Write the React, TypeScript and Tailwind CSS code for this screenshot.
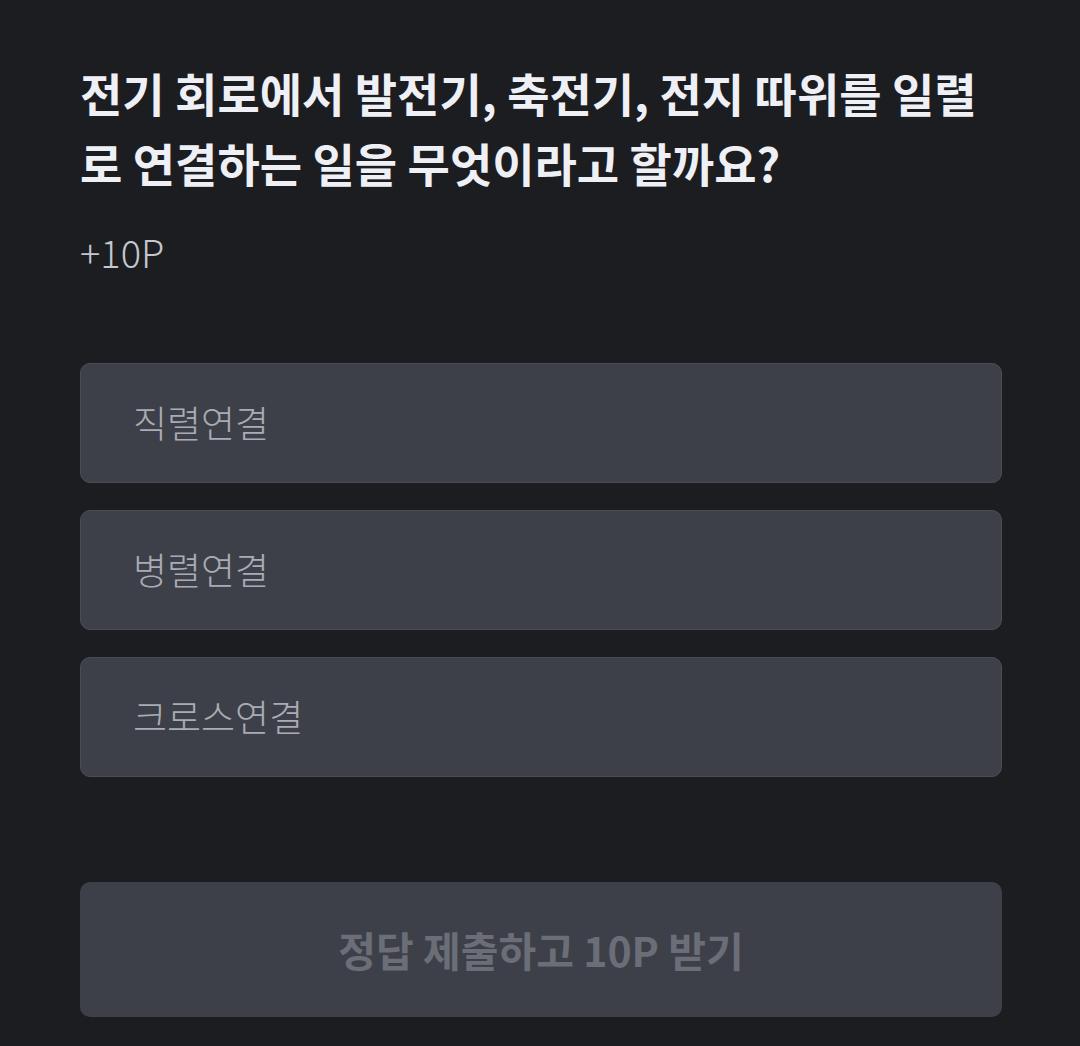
const options = ["직렬연결", "병렬연결", "크로스연결"];

export default function App() {
  return (
    <div
      className="min-h-[1046px] w-full bg-[#1c1d21] pl-[80px] pr-[78px] pt-[57px]"
      style={{ fontFamily: '"Noto Sans CJK KR", "Noto Sans", sans-serif' }}
    >
      <h1 className="break-all text-[46px] font-bold leading-[70px] text-[#eef0f5]">
        전기 회로에서 발전기, 축전기, 전지 따위를 일렬로 연결하는 일을 무엇이라고 할까요?
      </h1>
      <p className="mt-[35px] text-[38px] font-light leading-[40px] text-[#c4c7ce]">+10P</p>

      <div className="mt-[91px] flex flex-col gap-[27px]">
        {options.map((o) => (
          <button
            key={o}
            className="flex h-[120px] w-full items-center rounded-[10px] border border-[#4b4d55] bg-[#3e4049] px-[52px] text-left text-[37px] font-light text-[#a9acb4]"
          >
            {o}
          </button>
        ))}
      </div>

      <button className="mt-[105px] flex h-[135px] w-full items-center justify-center rounded-[10px] bg-[#3e4049] text-[41px] font-bold text-[#6b6e77]">
        정답 제출하고 10P 받기
      </button>
    </div>
  );
}
